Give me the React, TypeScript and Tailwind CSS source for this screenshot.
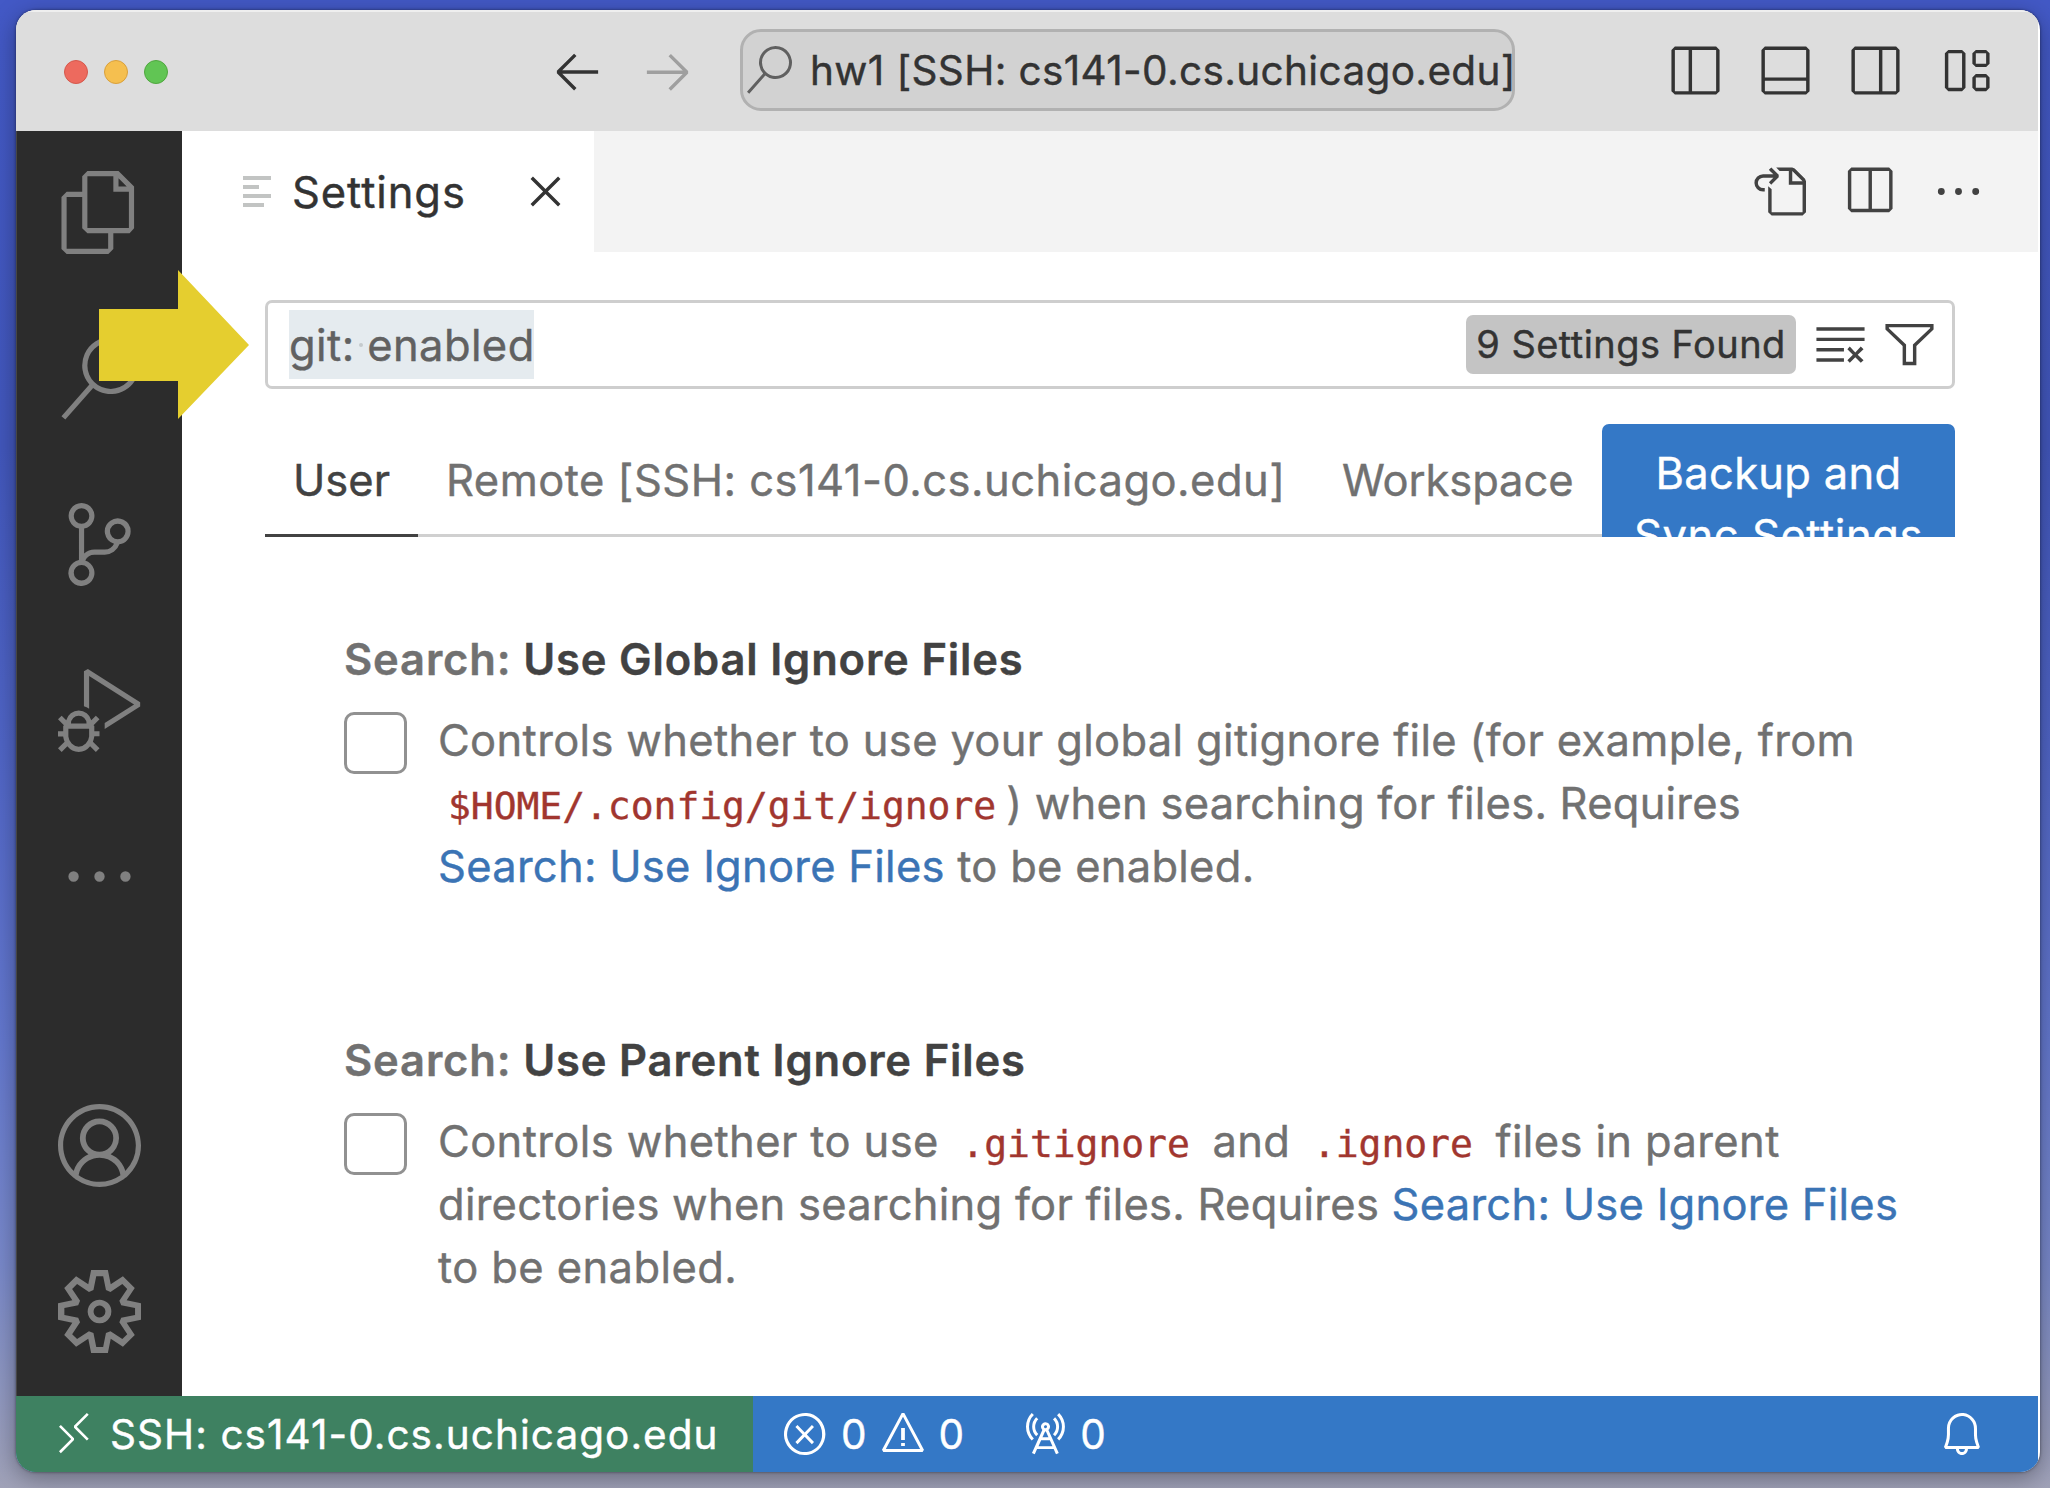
import type { ReactNode } from "react";
import {
  VscAccount,
  VscArrowLeft,
  VscArrowRight,
  VscBell,
  VscClearAll,
  VscClose,
  VscDebugAlt,
  VscEllipsis,
  VscError,
  VscFiles,
  VscFilter,
  VscGoToFile,
  VscLayout,
  VscLayoutPanelOff,
  VscLayoutSidebarLeftOff,
  VscLayoutSidebarRightOff,
  VscRadioTower,
  VscRemote,
  VscSearch,
  VscSettingsGear,
  VscSourceControl,
  VscSplitHorizontal,
  VscWarning,
} from "react-icons/vsc";

function TitleBar() {
  return (
    <header className="flex h-[121px] shrink-0 items-center bg-[#dddddd] text-[#333333] shadow-[inset_0_2px_0_#efefef]">
      <div className="ml-[48px] flex w-[104px] gap-4 pt-[2px]">
        <span className="size-6 rounded-full border border-[#d5584c] bg-[#ed6a5e]" />
        <span className="size-6 rounded-full border border-[#d9a03c] bg-[#f5bf4f]" />
        <span className="size-6 rounded-full border border-[#50a73f] bg-[#61c554]" />
      </div>
      <div className="ml-[382px] flex gap-[35px]">
        <VscArrowLeft className="size-[55px]" />
        <VscArrowRight className="size-[55px] text-[#9f9f9f]" />
      </div>
      <div className="mb-[2px] ml-[45px] flex h-[82px] w-[775px] items-center overflow-hidden rounded-[21px] border-[3px] border-[#b1b1b1] bg-[#d2d2d2] pl-[2px]">
        <VscSearch className="size-[48px] shrink-0 text-[#606060]" />
        <span className="ml-[17px] pt-[3px] text-[40.5px] leading-[50px] tracking-[0.36px] whitespace-nowrap">
          hw1 [SSH: cs141-0.cs.uchicago.edu]
        </span>
      </div>
      <div className="mr-[45px] ml-auto flex gap-[35px]">
        <VscLayoutSidebarLeftOff className="size-[55px]" />
        <VscLayoutPanelOff className="size-[55px]" />
        <VscLayoutSidebarRightOff className="size-[55px]" />
        <VscLayout className="size-[55px]" />
      </div>
    </header>
  );
}

function ActivityItem({ children }: { children: ReactNode }) {
  return <div className="flex h-[166px] w-full items-center justify-center pb-[4px]">{children}</div>;
}

function ActivityBar() {
  return (
    <nav className="flex w-[166px] shrink-0 flex-col bg-[#2c2c2c] text-[#808080] shadow-[inset_1px_0_0_#474747]">
      <ActivityItem><VscFiles className="size-[83px]" /></ActivityItem>
      <ActivityItem><VscSearch className="size-[83px]" /></ActivityItem>
      <ActivityItem><VscSourceControl className="size-[83px]" /></ActivityItem>
      <ActivityItem><VscDebugAlt className="size-[83px]" /></ActivityItem>
      <ActivityItem><VscEllipsis className="size-[83px]" /></ActivityItem>
      <div className="mt-auto">
        <ActivityItem><VscAccount className="size-[83px]" /></ActivityItem>
        <ActivityItem><VscSettingsGear className="size-[83px]" /></ActivityItem>
      </div>
    </nav>
  );
}

function EditorTabs() {
  return (
    <div className="flex h-[121px] shrink-0 items-center bg-[#f3f3f3]">
      <div className="flex h-full w-[412px] items-center bg-white text-[#333333]">
        <div className="ml-[61px] flex w-[28px] flex-col gap-[5px]">
          <span className="h-[4px] w-[28px] bg-[#c2c4c3]" />
          <span className="h-[4px] w-[16px] bg-[#c2c4c3]" />
          <span className="h-[4px] w-[28px] bg-[#c2c4c3]" />
          <span className="h-[4px] w-[21px] bg-[#c2c4c3]" />
        </div>
        <span className="ml-[21px] w-[200px] text-[43.5px] leading-[62px] tracking-[0.9px]">Settings</span>
        <VscClose className="ml-[26px] size-[55px]" />
      </div>
      <div className="mr-[52px] ml-auto flex gap-[35px] text-[#424242]">
        <VscGoToFile className="size-[55px]" />
        <VscSplitHorizontal className="size-[55px]" />
        <VscEllipsis className="size-[55px]" />
      </div>
    </div>
  );
}

function SearchField() {
  return (
    <div className="flex h-[89px] items-center rounded-[7px] border-[3px] border-[#cecece] pr-[15px] pl-[21px]">
      <span className="relative h-[69px] w-[245px] bg-[#e5ebef] text-[43.5px] leading-[70px] tracking-[0.4px] whitespace-nowrap text-[#616161]">
        git: enabled
        <span className="absolute top-[33px] left-[70px] size-[4px] rounded-full bg-[#c5cacd]" />
      </span>
      <span className="ml-auto flex h-[59px] w-[330px] items-center justify-center rounded-[7px] bg-[#c4c4c4] text-[38px] tracking-[0.45px] whitespace-nowrap text-[#333333]">
        9 Settings Found
      </span>
      <VscClearAll className="ml-[17px] size-[55px] text-[#424242]" />
      <VscFilter className="ml-[14px] size-[55px] text-[#424242]" />
    </div>
  );
}

function ScopeTabs() {
  return (
    <div className="mt-[35px] flex h-[113px] overflow-hidden text-[43.5px] whitespace-nowrap text-[#717171] shadow-[inset_0_-3px_0_#d0d0d0]">
      <div className="h-[113px] w-[153px] border-b-[3px] border-[#424242] pl-[28px] leading-[113px] text-[#424242]">User</div>
      <div className="w-[896px] pl-[28px] leading-[113px] tracking-[0.47px]">Remote [SSH: cs141-0.cs.uchicago.edu]</div>
      <div className="w-[288px] pl-[28px] leading-[113px] tracking-[-0.1px]">Workspace</div>
      <button className="flex h-[150px] w-[353px] shrink-0 flex-col items-center rounded-[7px] bg-[#3478c6] pt-[18px] leading-[62px] text-white">
        <span className="tracking-[0.3px]">Backup and</span>
        <span className="tracking-[0.55px]">Sync Settings</span>
      </button>
    </div>
  );
}

function Code({ children }: { children: ReactNode }) {
  return (
    <code className="px-[10px] font-['DejaVu_Sans_Mono',monospace] text-[38px] leading-none tracking-[-0.04px] text-[#a1362f]">
      {children}
    </code>
  );
}

function SettingLink() {
  return <a className="text-[#3b74b5]">Search: Use Ignore Files</a>;
}

function Setting({ title, children }: { title: string; children: ReactNode }) {
  return (
    <section className="h-[401px] pl-[79px] text-[43.5px] leading-[63px] whitespace-nowrap text-[#717171]">
      <h3 className="h-[81px] font-semibold tracking-[0.83px]">
        Search: <span className="text-[#424242]">{title}</span>
      </h3>
      <div className="flex">
        <span className="mt-[3px] h-[62px] w-[63px] shrink-0 rounded-[10px] border-[3px] border-[#919191]" />
        <div className="ml-[31px]">{children}</div>
      </div>
    </section>
  );
}

function StatusBar() {
  return (
    <footer className="flex h-[76px] shrink-0 items-center bg-[#3478c6] text-[40.5px] leading-[50px] whitespace-nowrap text-white">
      <div className="flex h-full w-[737px] items-center bg-[#3e8161] pl-[34px]">
        <VscRemote className="size-[48px]" />
        <span className="ml-[12px] pt-px tracking-[1.05px]">SSH: cs141-0.cs.uchicago.edu</span>
      </div>
      <VscError className="ml-[28px] size-[48px]" />
      <span className="ml-[12px] pt-px">0</span>
      <VscWarning className="ml-[12px] size-[48px]" />
      <span className="ml-[12px] pt-px">0</span>
      <VscRadioTower className="ml-[56px] size-[48px]" />
      <span className="ml-[12px] pt-px">0</span>
      <VscBell className="mr-[52px] ml-auto size-[48px]" />
    </footer>
  );
}

export default function App() {
  return (
    <div className="relative h-[1488px] w-[2050px] overflow-hidden bg-[linear-gradient(to_bottom,#4359c6_0%,#4257bc_30%,#5065c6_50%,#6478ce_70%,#7989ca_85%,#a0a2b8_100%)] pt-[10px] pl-[16px] font-[Inter,sans-serif] [-webkit-text-stroke:0.4px]">
      <div className="flex h-[1462px] w-[2024px] flex-col overflow-hidden rounded-[20px] bg-white pr-[2px] shadow-[0_0_3px_rgba(0,0,0,0.5),0_6px_24px_rgba(0,0,0,0.35)]">
        <TitleBar />
        <div className="flex min-h-0 flex-1">
          <ActivityBar />
          <main className="flex min-w-0 flex-1 flex-col">
            <EditorTabs />
            <div className="mt-[48px] mr-[83px] ml-[83px]">
              <SearchField />
              <ScopeTabs />
              <div className="mt-[91px]">
                <Setting title="Use Global Ignore Files">
                  <p className="tracking-[0.34px]">Controls whether to use your global gitignore file (for example, from</p>
                  <p className="tracking-[0.23px]"><Code>$HOME/.config/git/ignore</Code>) when searching for files. Requires</p>
                  <p className="tracking-[0.26px]"><SettingLink /> to be enabled.</p>
                </Setting>
                <Setting title="Use Parent Ignore Files">
                  <p className="tracking-[0.38px]">Controls whether to use <Code>.gitignore</Code> and <Code>.ignore</Code> files in parent</p>
                  <p className="tracking-[0.25px]">directories when searching for files. Requires <SettingLink /></p>
                  <p className="tracking-[0.4px]">to be enabled.</p>
                </Setting>
              </div>
            </div>
          </main>
        </div>
        <StatusBar />
      </div>
      <svg className="absolute top-[270px] left-[99px] h-[150px] w-[150px]" viewBox="0 0 150 150">
        <path d="M0 39H79V0L150 75L79 149V111H0Z" fill="#e5ce2f" />
      </svg>
    </div>
  );
}
